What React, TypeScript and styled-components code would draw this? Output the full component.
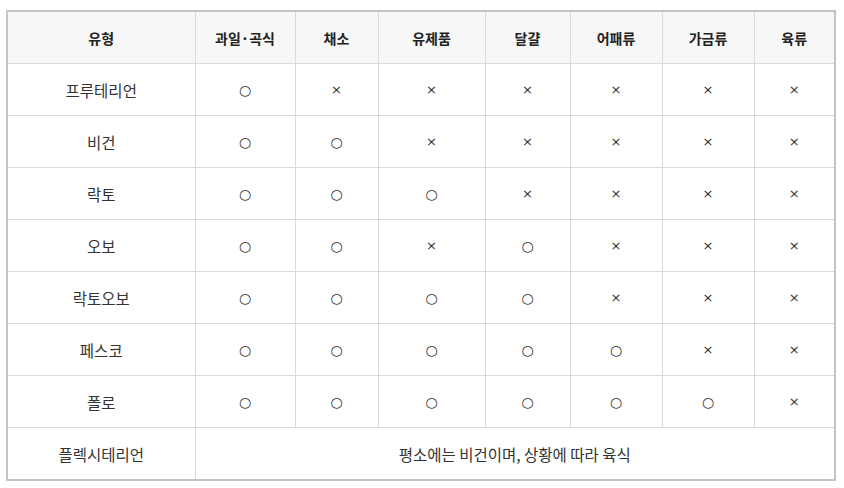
import * as React from "react";
import styled, { createGlobalStyle } from "styled-components";

const GlobalStyle = createGlobalStyle`
  html, body {
    margin: 0;
    padding: 0;
    background: #ffffff;
  }
  body {
    font-family: "Noto Sans CJK KR", "Noto Sans", sans-serif;
    color: #333333;
  }
`;

const Page = styled.div`
  padding: 10px 0 0 6px;
`;

const Table = styled.table`
  width: 830px;
  border-collapse: collapse;
  table-layout: fixed;
  border: 2px solid #c4c4c4;
`;

const HeadCell = styled.th`
  height: 51px;
  padding: 0;
  background: #f7f7f7;
  border: 1px solid #d9d9d9;
  font-size: 14px;
  font-weight: 700;
  color: #222222;
  text-align: center;
  vertical-align: middle;
`;

const Cell = styled.td`
  height: 51px;
  padding: 0;
  border: 1px solid #d9d9d9;
  text-align: center;
  vertical-align: middle;
  color: #333333;
  font-size: 15.5px;
`;

const Mark = styled.span<{ $yes: boolean }>`
  display: block;
  font-family: "DejaVu Sans", sans-serif;
  font-size: ${({ $yes }) => ($yes ? "14px" : "13px")};
  color: #333333;
  line-height: 1;
`;

const columns = ["유형", "과일·곡식", "채소", "유제품", "달걀", "어패류", "가금류", "육류"];
const widths = [188, 100, 83, 107, 85, 92, 92, 81];

const rows: [string, number][] = [
  ["프루테리언", 1],
  ["비건", 2],
  ["락토", 3],
  ["오보", 2],
  ["락토오보", 4],
  ["페스코", 5],
  ["폴로", 6],
];

const oboYes = [1, 1, 0, 1, 0, 0, 0];

export default function App() {
  return (
    <Page>
      <GlobalStyle />
      <Table>
        <colgroup>
          {widths.map((w, i) => (
            <col key={i} style={{ width: w }} />
          ))}
        </colgroup>
        <thead>
          <tr>
            {columns.map((c) => (
              <HeadCell key={c}>{c}</HeadCell>
            ))}
          </tr>
        </thead>
        <tbody>
          {rows.map(([name, count]) => (
            <tr key={name}>
              <Cell>{name}</Cell>
              {Array.from({ length: 7 }).map((_, i) => {
                const yes = name === "오보" ? oboYes[i] === 1 : i < count;
                return (
                  <Cell key={i}>
                    <Mark $yes={yes}>{yes ? "○" : "×"}</Mark>
                  </Cell>
                );
              })}
            </tr>
          ))}
          <tr>
            <Cell>플렉시테리언</Cell>
            <Cell colSpan={7}>평소에는 비건이며, 상황에 따라 육식</Cell>
          </tr>
        </tbody>
      </Table>
    </Page>
  );
}
